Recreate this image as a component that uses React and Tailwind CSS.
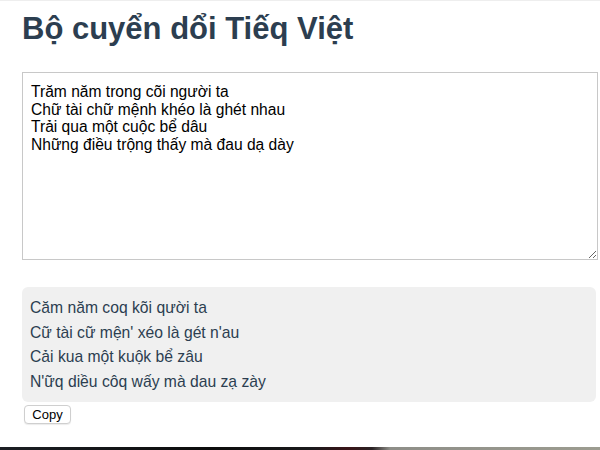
import { useState } from 'react';

const input = `Trăm năm trong cõi người ta
Chữ tài chữ mệnh khéo là ghét nhau
Trải qua một cuộc bể dâu
Những điều trộng thấy mà đau dạ dày`;

const output = [
  'Căm năm coq kõi qười ta',
  "Cữ tài cữ mện' xéo là gét n'au",
  'Cải kua một kuộk bể zâu',
  "N'ữq diều côq wấy mà dau zạ zày",
];

export default function App() {
  const [text, setText] = useState(input);

  return (
    <div className="h-[450px] flex flex-col bg-white border-t border-[#eeeeee] font-['Liberation_Sans',Arial,sans-serif] overflow-hidden">
      <div className="flex-1 pl-[22px] pr-[2px]">
        <h1 className="pt-[9px] text-[31px] leading-[37px] font-bold text-[#2c3e50]">Bộ cuyển dổi Tiếq Việt</h1>

        <textarea
          value={text}
          onChange={(e) => setText(e.target.value)}
          spellCheck={false}
          className="mt-[25px] block w-full h-[188px] border border-[#c8c8c8] bg-white px-2 pt-[10px] text-[15.6px] leading-[17.6px] text-black outline-none resize-y"
        />

        <div className="mt-[27px] mr-[2px] rounded-md bg-[#f0f0f0] pl-2 pt-[9px] pb-[8px] text-[15.7px] leading-[24.5px] text-[#2c3e50]">
          {output.map((line, i) => (
            <p key={i}>{line}</p>
          ))}
        </div>

        <button className="mt-[3px] ml-[2px] h-[19px] w-[47px] rounded border border-[#cfcfcf] bg-white text-[13px] leading-none text-black shadow-[0_1px_1px_rgba(0,0,0,0.08)]">
          Copy
        </button>
      </div>

      {/* strip of the desktop below the window */}
      <div className="h-[3px] bg-[linear-gradient(to_right,#1c1f24_0%,#0c0c0c_35%,#1a1a1c_52%,#3a1418_58%,#2a2224_62%,#8e8e88_65%,#9c9c90_100%)]" />
    </div>
  );
}
